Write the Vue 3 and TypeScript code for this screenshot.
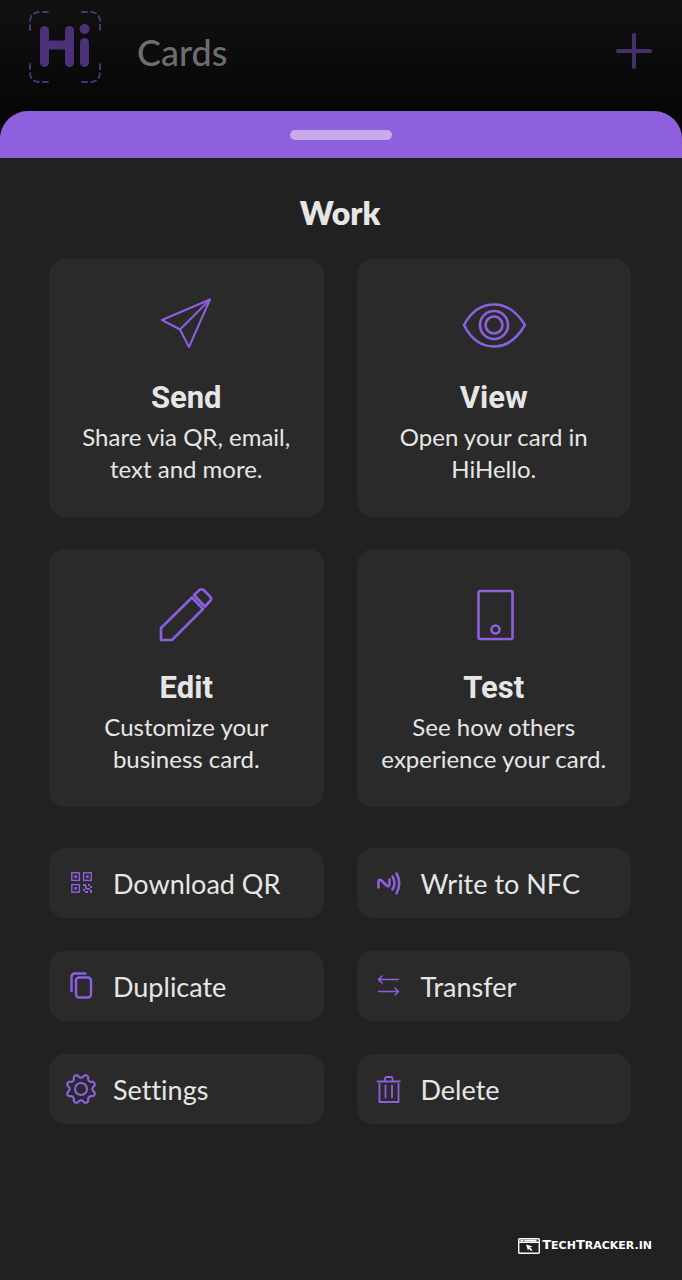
<script setup lang="ts">
interface Tile {
  id: 'send' | 'view' | 'edit' | 'test'
  title: string
  lines: [string, string]
}

interface Action {
  id: 'qr' | 'nfc' | 'duplicate' | 'transfer' | 'settings' | 'delete'
  label: string
}

const tiles: Tile[] = [
  { id: 'send', title: 'Send', lines: ['Share via QR, email,', 'text and more.'] },
  { id: 'view', title: 'View', lines: ['Open your card in', 'HiHello.'] },
  { id: 'edit', title: 'Edit', lines: ['Customize your', 'business card.'] },
  { id: 'test', title: 'Test', lines: ['See how others', 'experience your card.'] },
]

const actions: Action[] = [
  { id: 'qr', label: 'Download QR' },
  { id: 'nfc', label: 'Write to NFC' },
  { id: 'duplicate', label: 'Duplicate' },
  { id: 'transfer', label: 'Transfer' },
  { id: 'settings', label: 'Settings' },
  { id: 'delete', label: 'Delete' },
]

// Eight-lobed cog outline around (16, 16), with a valley at the top.
function cogPath(): string {
  const steps = 160
  const points: string[] = []
  for (let i = 0; i < steps; i++) {
    const angle = (i / steps) * Math.PI * 2
    const wave = Math.tanh(-1.3 * Math.cos(angle * 8))
    const radius = 13 + 1.9 * wave
    const x = 16 + radius * Math.sin(angle)
    const y = 16 - radius * Math.cos(angle)
    points.push(`${x.toFixed(2)} ${y.toFixed(2)}`)
  }
  return `M${points.join('L')}Z`
}

const cog = cogPath()
</script>

<template>
  <div class="screen">
    <header class="topbar">
      <svg class="logo" viewBox="0 0 74 74" role="img" aria-label="Hi">
        <g class="frame">
          <path d="M2 20V12Q2 2 12 2H20" />
          <path d="M54 2H62Q72 2 72 12V20" />
          <path d="M2 54V62Q2 72 12 72H20" />
          <path d="M54 72H62Q72 72 72 62V54" />
        </g>
        <g class="mark">
          <line x1="16.5" y1="20.5" x2="16.5" y2="52.5" />
          <line x1="41.5" y1="20.5" x2="41.5" y2="52.5" />
          <line x1="16.5" y1="35" x2="41.5" y2="35" />
          <line x1="56.5" y1="32.5" x2="56.5" y2="52.5" />
          <circle cx="56.5" cy="19" r="5" />
        </g>
      </svg>
      <h1 class="heading">Cards</h1>
      <button class="add" type="button" aria-label="Add card">
        <svg viewBox="0 0 36 36"><path d="M18 2V34M2 18H34" /></svg>
      </button>
    </header>

    <main class="sheet">
      <div class="grip"><span class="handle"></span></div>

      <div class="body">
        <h2 class="name">Work</h2>

        <div class="tiles">
          <button v-for="tile in tiles" :key="tile.id" class="tile" type="button">
            <svg class="tile-icon" viewBox="0 0 64 64" aria-hidden="true">
              <g v-if="tile.id === 'send'" class="thin">
                <path d="M56 6.500L8 27L26 36.500L35 54Z" />
                <path d="M56 6.500L26 36.500" />
              </g>
              <g v-else-if="tile.id === 'view'">
                <path d="M2 32C9 19 19 11.500 32 11.500S55 19 63 32C55 46 45 53.500 32 53.500S9 46 2 32Z" />
                <circle cx="32" cy="32" r="14" />
                <circle cx="32" cy="32" r="8.500" />
              </g>
              <g v-else-if="tile.id === 'edit'">
                <path d="M7 57V45L38 14.500L49 26L18 57Z" />
                <path d="M40 12L45.500 7Q47.500 5.500 49.500 7L56 13.500Q58 15.500 56.500 17.500L51 23.500Z" />
              </g>
              <g v-else>
                <rect x="16.500" y="8" width="34" height="48" rx="1.500" />
                <circle cx="33.500" cy="46.500" r="4" />
              </g>
            </svg>
            <span class="tile-title">{{ tile.title }}</span>
            <span class="tile-text">{{ tile.lines[0] }}<br />{{ tile.lines[1] }}</span>
          </button>
        </div>

        <div class="actions">
          <button v-for="action in actions" :key="action.id" class="action" type="button">
            <svg class="action-icon" viewBox="0 0 32 32" aria-hidden="true">
              <g v-if="action.id === 'qr'" class="qr">
                <rect x="6.800" y="5.800" width="7.600" height="7.600" />
                <rect x="18.600" y="5.800" width="7.600" height="7.600" />
                <rect x="6.800" y="17.600" width="7.600" height="7.600" />
                <path class="solid" d="M9.300 8.300h2.600v2.600h-2.600zM21.100 8.300h2.600v2.600h-2.600zM9.300 20.100h2.600v2.600h-2.600zM18 17h3v2h-3zM23 17h2v2h-2zM25 19h2v2h-2zM20 19h2v3h-2zM22 21h3v2h-3zM18 22h2v2h-2zM20 24h3v2h-3zM25 23h2v3h-2z" />
              </g>
              <g v-else-if="action.id === 'nfc'" class="bold">
                <path d="M5.500 20.500V15Q5.500 11.500 8.500 13.500L13.500 18.500Q16 20.500 16.500 17V12.500" />
                <path d="M19.500 9.500Q23.500 16 19.500 22.500" />
                <path d="M23.500 6.500Q29 16 23.500 26.500" />
              </g>
              <g v-else-if="action.id === 'duplicate'" class="medium">
                <rect x="11" y="7.500" width="15" height="20" rx="3" />
                <path d="M6.500 21V7Q6.500 3.500 10 3.500H20.500" />
              </g>
              <g v-else-if="action.id === 'transfer'" class="light">
                <path d="M25.500 9.500H5.500M9 6L5.500 9.500L9 13" />
                <path d="M5.500 21.500H25.500M22 18L25.500 21.500L22 25" />
              </g>
              <g v-else-if="action.id === 'settings'" class="cog">
                <path :d="cog" />
                <circle cx="16" cy="16" r="6" />
              </g>
              <g v-else class="trash">
                <path d="M4.500 8.500H27M12 8V5.500Q12 4 13.500 4H18Q19.500 4 19.500 5.500V8" />
                <path d="M6.500 11V29H25.500V11M12.500 12.500V24.500M19 12.500V24.500" />
              </g>
            </svg>
            <span class="action-label">{{ action.label }}</span>
          </button>
        </div>

        <footer class="credit">
          <svg class="credit-icon" viewBox="0 0 22 16" aria-hidden="true">
            <rect x="0.700" y="0.700" width="20.600" height="14.600" rx="1" />
            <path d="M1 4.300H21M3 2.500H5M7 2.500H18" />
            <path class="pointer" d="M8 6.500L14.500 8.500L12 9.500L14.500 12L13 13L11 10.800L10 12.500Z" />
          </svg>
          <span class="brand"><span class="cap">T</span>ech<span class="cap">T</span>racker.in</span>
        </footer>
      </div>
    </main>
  </div>
</template>

<style>
body {
  margin: 0;
  background: #212121;
}
</style>

<style scoped>
.screen {
  display: flex;
  flex-direction: column;
  min-height: 100vh;
  background: linear-gradient(#111111, #060606 110px, #060606);
  font-family: Lato, "Noto Sans", sans-serif;
  font-variant-ligatures: none;
  color: #e6e6e6;
}

button {
  margin: 0;
  border: 0;
  font: inherit;
  font-variant-ligatures: none;
  color: inherit;
  cursor: pointer;
}

svg {
  display: block;
  flex: none;
  fill: none;
  stroke: #8c5fe0;
  stroke-linejoin: round;
  stroke-linecap: round;
}

.topbar {
  display: flex;
  align-items: center;
  box-sizing: border-box;
  height: 111px;
  padding: 0 30px 18px 28px;
}

.logo {
  width: 74px;
  height: 74px;
  stroke: #4b3178;
}

.frame {
  stroke-width: 2;
  stroke-dasharray: 5 4;
}

.mark {
  stroke-width: 9;
}

.mark circle {
  fill: #4b3178;
  stroke: none;
}

.heading {
  flex: 1;
  margin: 0 0 0 35px;
  padding-top: 10px;
  font-size: 36px;
  font-weight: 500;
  line-height: 44px;
  color: #6d6d6d;
}

.add {
  margin-top: 8px;
  padding: 0;
  background: none;
}

.add svg {
  width: 36px;
  height: 36px;
  stroke: #46306b;
  stroke-width: 4;
}

.sheet {
  display: flex;
  flex: 1;
  flex-direction: column;
  border-radius: 28px 28px 0 0;
  overflow: hidden;
  background: #212121;
}

.grip {
  display: flex;
  align-items: center;
  justify-content: center;
  height: 47px;
  background: #8f60dd;
}

.handle {
  width: 15%;
  height: 10px;
  border-radius: 5px;
  background: #c8abeb;
}

.body {
  display: flex;
  flex: 1;
  flex-direction: column;
  padding: 35px 51px 24px 49px;
}

.name {
  margin: 0 0 26px;
  font-size: 32px;
  font-weight: 800;
  line-height: 40px;
  text-align: center;
}

.tiles,
.actions {
  display: grid;
  grid-template-columns: 1fr 1fr;
  gap: 32px 33px;
}

.actions {
  row-gap: 33px;
  margin-top: 41px;
}

.tile,
.action {
  display: flex;
  border-radius: 16px;
  background: #2a2a2a;
}

.tile {
  flex-direction: column;
  align-items: center;
  padding: 34px 8px 32px;
}

.tile-icon {
  width: 64px;
  height: 64px;
  margin-bottom: 21px;
  stroke-width: 2.6;
}

.thin {
  stroke-width: 2;
}

.tile-title {
  margin-bottom: 4px;
  font-family: Roboto, sans-serif;
  font-size: 31px;
  font-weight: 700;
  line-height: 39px;
}

.tile-text {
  font-size: 24px;
  line-height: 32px;
  white-space: nowrap;
}

.action {
  align-items: center;
  gap: 16px;
  height: 70px;
  padding: 0 16px;
  font-size: 27px;
  line-height: 36px;
  text-align: left;
}

.action-icon {
  width: 32px;
  height: 32px;
}

.action-label {
  padding-top: 2px;
}

.qr {
  stroke-width: 1.4;
  stroke-linejoin: miter;
}

.qr .solid {
  fill: #8c5fe0;
  stroke: none;
}

.bold {
  stroke-width: 2.6;
}

.medium {
  stroke-width: 2.4;
}

.light {
  stroke-width: 1.5;
}

.trash {
  stroke-width: 1.8;
}

.cog {
  stroke-width: 2.2;
}

.credit {
  display: flex;
  align-items: center;
  align-self: flex-end;
  gap: 2px;
  margin-top: auto;
  margin-right: -21px;
  color: #ffffff;
}

.brand {
  font-family: "DejaVu Sans", sans-serif;
  font-size: 11px;
  font-weight: 700;
  line-height: 20px;
  text-transform: uppercase;
}

.cap {
  font-size: 13px;
}

.credit-icon {
  width: 22px;
  height: 16px;
  stroke: #ffffff;
  stroke-width: 1.4;
}

.credit-icon .pointer {
  fill: #ffffff;
  stroke: none;
}
</style>
